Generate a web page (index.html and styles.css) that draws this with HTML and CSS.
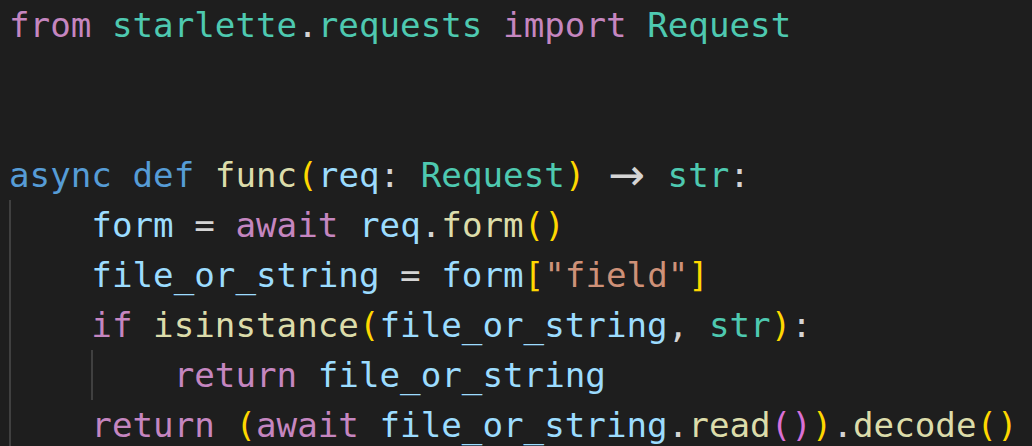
FILE: index.html
```html
<!DOCTYPE html>
<html>
<head>
<meta charset="utf-8">
<link rel="stylesheet" href="styles.css">
</head>
<body>
<div class="editor">
  <div class="line"><span class="kw">from</span> <span class="ty">starlette</span><span class="p">.</span><span class="ty">requests</span> <span class="kw">import</span> <span class="ty">Request</span></div>
  <div class="line"></div>
  <div class="line"></div>
  <div class="line"><span class="st">async</span> <span class="st">def</span> <span class="fn">func</span><span class="b1">(</span><span class="v">req</span><span class="p">:</span> <span class="ty">Request</span><span class="b1">)</span> <span class="arrow">→</span> <span class="ty">str</span><span class="p">:</span></div>
  <div class="line"><span class="ind"></span><span class="v">form</span> <span class="p">=</span> <span class="kw">await</span> <span class="v">req</span><span class="p">.</span><span class="fn">form</span><span class="b1">()</span></div>
  <div class="line"><span class="ind"></span><span class="v">file_or_string</span> <span class="p">=</span> <span class="v">form</span><span class="b1">[</span><span class="s">"field"</span><span class="b1">]</span></div>
  <div class="line"><span class="ind"></span><span class="kw">if</span> <span class="fn">isinstance</span><span class="b1">(</span><span class="v">file_or_string</span><span class="p">,</span> <span class="ty">str</span><span class="b1">)</span><span class="p">:</span></div>
  <div class="line"><span class="ind"></span><span class="ind"></span><span class="kw">return</span> <span class="v">file_or_string</span></div>
  <div class="line"><span class="ind"></span><span class="kw">return</span> <span class="b1">(</span><span class="kw">await</span> <span class="v">file_or_string</span><span class="p">.</span><span class="fn">read</span><span class="b2">()</span><span class="b1">)</span><span class="p">.</span><span class="fn">decode</span><span class="b1">()</span></div>
</div>
</body>
</html>
```
FILE: styles.css
```css
html, body {
  margin: 0;
  padding: 0;
  background: #1e1e1e;
}
.editor {
  padding-left: 9px;
  font-family: "DejaVu Sans Mono", "Liberation Mono", monospace;
  font-size: 34.2px;
  line-height: 50px;
  color: #d4d4d4;
  height: 446px;
  overflow: hidden;
}
.line {
  height: 50px;
  white-space: pre;
}
.ind {
  display: inline-block;
  width: 4ch;
  height: 50px;
  vertical-align: top;
  box-shadow: inset 2px 0 0 #404040;
}
.kw { color: #c586c0; }
.ty { color: #4ec9b0; }
.st { color: #569cd6; }
.fn { color: #dcdcaa; }
.v { color: #9cdcfe; }
.s { color: #ce9178; }
.p { color: #d4d4d4; }
.b1 { color: #ffd700; }
.b2 { color: #da70d6; }
.arrow {
  display: inline-block;
  width: 41px;
  height: 50px;
  vertical-align: top;
  text-align: center;
  font-family: "DejaVu Sans", sans-serif;
  font-size: 44px;
  line-height: 50px;
  color: #d4d4d4;
}
```
